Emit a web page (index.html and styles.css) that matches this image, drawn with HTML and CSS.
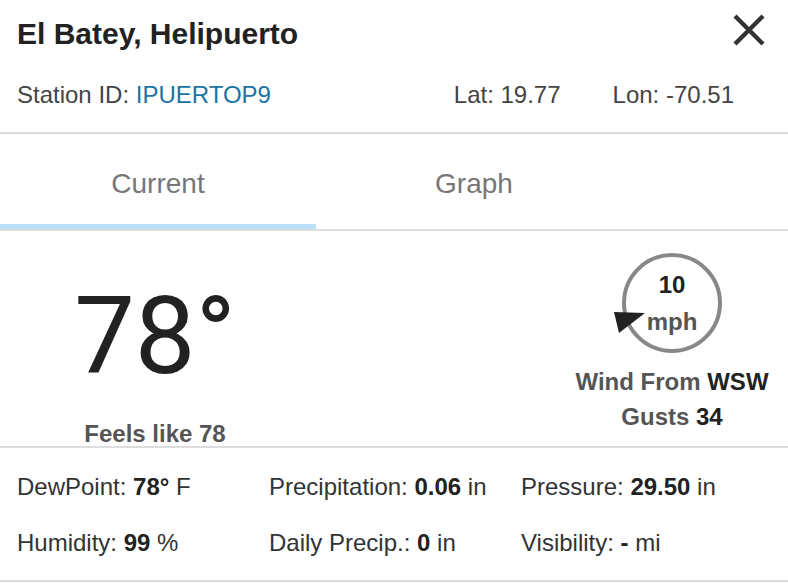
FILE: index.html
```html
<!DOCTYPE html>
<html lang="en">
<head>
<meta charset="utf-8">
<title>El Batey, Helipuerto</title>
<link rel="stylesheet" href="styles.css">
</head>
<body>
<div class="panel">
  <header class="header">
    <div class="title-row">
      <h1 class="title">El Batey, Helipuerto</h1>
      <svg class="close" width="34" height="34" viewBox="0 0 34 34" aria-label="Close">
        <path d="M3 3 L31 31 M31 3 L3 31" />
      </svg>
    </div>
    <div class="meta">
      <div class="station">Station ID: <a class="link" href="#">IPUERTOP9</a></div>
      <div class="coords">
        <span>Lat: 19.77</span>
        <span>Lon: -70.51</span>
      </div>
    </div>
  </header>

  <nav class="tabs">
    <div class="tab active">Current</div>
    <div class="tab">Graph</div>
  </nav>

  <section class="current">
    <div class="temp-col">
      <div class="temp">78°</div>
      <div class="feels">Feels like 78</div>
    </div>
    <div class="wind-col">
      <div class="dial">
        <svg class="arrow" width="36" height="26" viewBox="0 0 36 26">
          <polygon points="2,2 33,3 7,23" />
        </svg>
        <span class="speed">10</span>
        <span class="unit">mph</span>
      </div>
      <div class="wind-line">Wind From <b>WSW</b></div>
      <div class="wind-line">Gusts <b>34</b></div>
    </div>
  </section>

  <section class="details">
    <div class="item">DewPoint: <b>78°</b> F</div>
    <div class="item">Precipitation: <b>0.06</b> in</div>
    <div class="item">Pressure: <b>29.50</b> in</div>
    <div class="item">Humidity: <b>99</b> %</div>
    <div class="item">Daily Precip.: <b>0</b> in</div>
    <div class="item">Visibility: <b>-</b> mi</div>
  </section>
</div>
</body>
</html>
```

FILE: styles.css
```css
* {
  box-sizing: border-box;
}

html, body {
  margin: 0;
  padding: 0;
  background: #ffffff;
}

body {
  font-family: "Liberation Sans", Arial, Helvetica, sans-serif;
  color: #333333;
}

.panel {
  width: 788px;
}

/* Header */
.header {
  padding: 17px 17px 0 17px;
  height: 134px;
  border-bottom: 2px solid #dddddd;
}

.title-row {
  display: flex;
  justify-content: space-between;
  align-items: flex-start;
}

.title {
  margin: 0;
  font-size: 30px;
  line-height: 34px;
  font-weight: bold;
  color: #222222;
}

.close {
  margin-top: -4px;
  margin-right: 5px;
  fill: none;
  stroke: #333333;
  stroke-width: 4.4;
}

.meta {
  margin-top: 30px;
  display: flex;
  justify-content: space-between;
  font-size: 24px;
  line-height: 28px;
  color: #444444;
}

.link {
  color: #1a74a5;
  text-decoration: none;
}

.coords {
  display: flex;
  gap: 52px;
  padding-right: 37px;
}

/* Tabs */
.tabs {
  display: flex;
  border-bottom: 2px solid #dddddd;
}

.tab {
  width: 316px;
  padding: 34px 0 24px;
  text-align: center;
  font-size: 28px;
  line-height: 32px;
  color: #777777;
  border-bottom: 5px solid transparent;
}

.tab.active {
  border-bottom-color: #b9e2f9;
}

/* Current conditions */
.current {
  display: flex;
  height: 217px;
  border-bottom: 2px solid #dddddd;
}

.temp-col {
  width: 310px;
  display: flex;
  flex-direction: column;
  align-items: center;
  padding-top: 50px;
}

.temp {
  font-family: Roboto, "Liberation Sans", sans-serif;
  font-weight: 400;
  font-size: 108px;
  line-height: 110px;
  color: #222222;
}

.feels {
  margin-top: 31px;
  font-size: 24px;
  line-height: 24px;
  font-weight: bold;
  color: #555555;
}

.wind-col {
  margin-left: auto;
  width: 232px;
  display: flex;
  flex-direction: column;
  align-items: center;
  padding-top: 22px;
}

.dial {
  position: relative;
  width: 100px;
  height: 100px;
  border: 4px solid #888888;
  border-radius: 50%;
  display: flex;
  flex-direction: column;
  align-items: center;
  justify-content: center;
  gap: 9px;
  font-size: 24px;
  line-height: 28px;
  font-weight: bold;
  margin-bottom: 11px;
}

.arrow {
  position: absolute;
  left: -14px;
  top: 53px;
  fill: #222222;
}

.speed {
  color: #222222;
}

.unit {
  color: #555555;
}

.wind-line {
  font-size: 24px;
  line-height: 35px;
  font-weight: bold;
  color: #555555;
}

.wind-line b {
  color: #222222;
}

/* Details grid */
.details {
  display: grid;
  grid-template-columns: 252px 252px 252px;
  row-gap: 28px;
  padding: 25px 17px 23px;
  border-bottom: 2px solid #dddddd;
  font-size: 24px;
  line-height: 28px;
  color: #333333;
}

.item b {
  color: #222222;
}
```
